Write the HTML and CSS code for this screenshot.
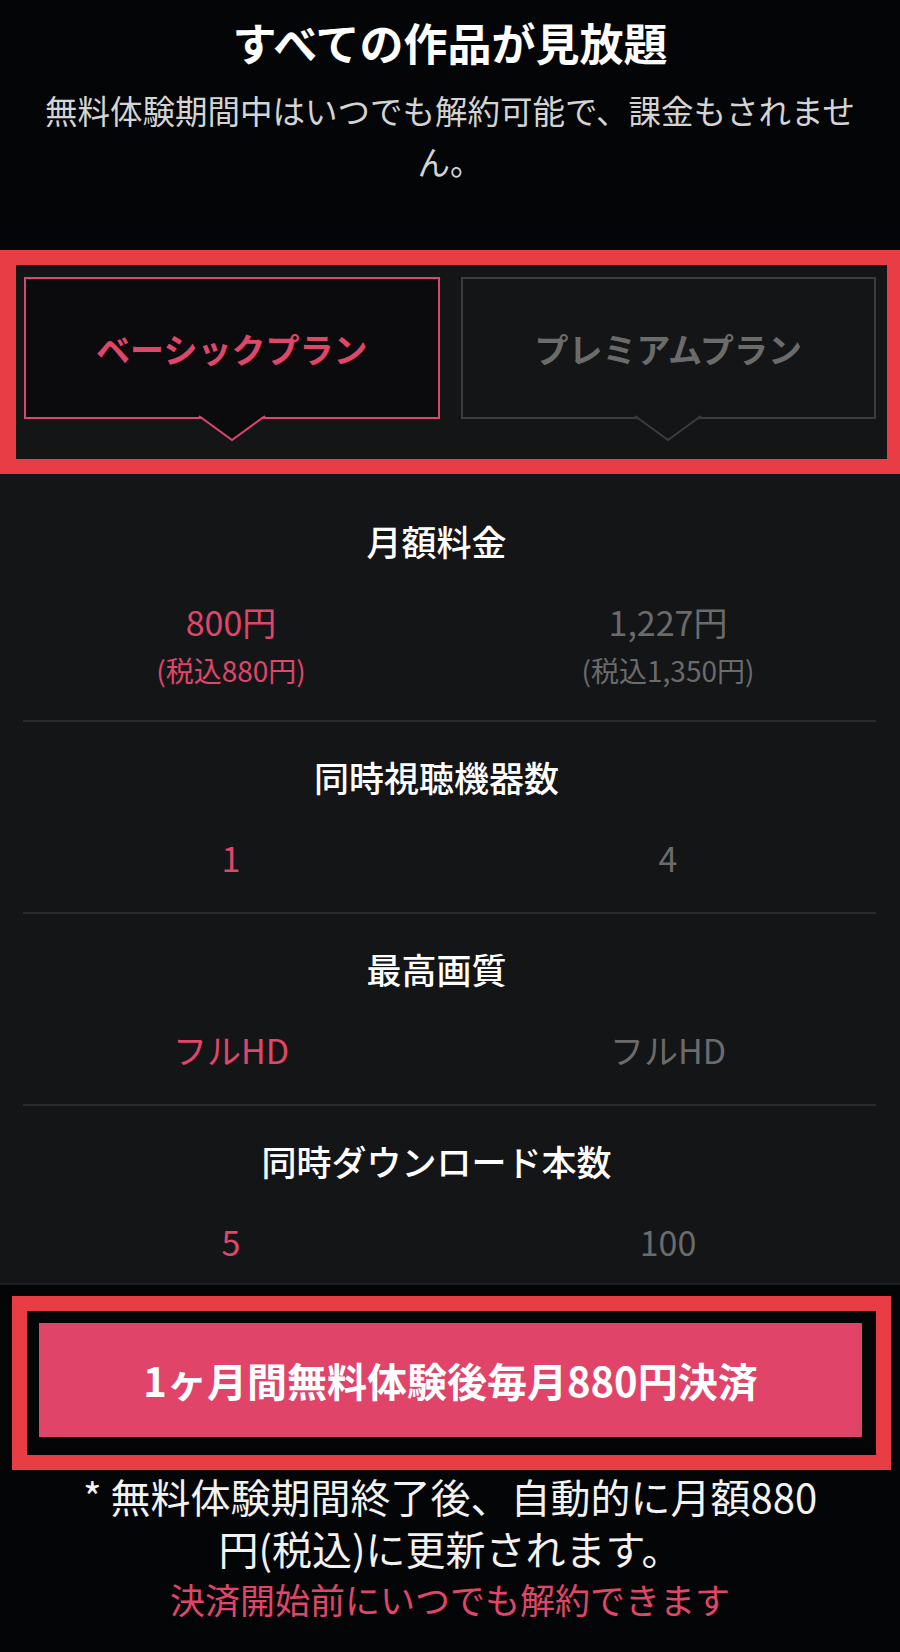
FILE: index.html
```html
<!DOCTYPE html>
<html lang="ja">
<head>
    <meta charset="UTF-8">
    <meta name="viewport" content="width=device-width, initial-scale=1.0">
    <title>プラン選択</title>
    <link rel="stylesheet" href="styles.css">
</head>
<body>
    <!-- Intro -->
    <header class="intro">
        <h1 class="intro-title">すべての作品が見放題</h1>
        <p class="intro-text">無料体験期間中はいつでも解約可能で、課金もされません。</p>
    </header>

    <!-- Plans -->
    <section class="plans">
        <div class="plan-tabs">
            <div class="plan-tab active">
                ベーシックプラン
                <svg class="tab-arrow" viewBox="0 0 66 26" width="66" height="26">
                    <polygon points="0,0 66,0 33,25"></polygon>
                    <polyline points="0,1 33,25 66,1"></polyline>
                </svg>
            </div>
            <div class="plan-tab">
                プレミアムプラン
                <svg class="tab-arrow" viewBox="0 0 66 26" width="66" height="26">
                    <polygon points="0,0 66,0 33,25"></polygon>
                    <polyline points="0,1 33,25 66,1"></polyline>
                </svg>
            </div>
        </div>

        <div class="spec-list">
            <div class="spec">
                <div class="spec-label">月額料金</div>
                <div class="spec-values">
                    <div class="spec-value basic">800円<small>(税込880円)</small></div>
                    <div class="spec-value premium">1,227円<small>(税込1,350円)</small></div>
                </div>
            </div>
            <div class="spec">
                <div class="spec-label">同時視聴機器数</div>
                <div class="spec-values">
                    <div class="spec-value basic">1</div>
                    <div class="spec-value premium">4</div>
                </div>
            </div>
            <div class="spec">
                <div class="spec-label">最高画質</div>
                <div class="spec-values">
                    <div class="spec-value basic">フルHD</div>
                    <div class="spec-value premium">フルHD</div>
                </div>
            </div>
            <div class="spec">
                <div class="spec-label">同時ダウンロード本数</div>
                <div class="spec-values">
                    <div class="spec-value basic">5</div>
                    <div class="spec-value premium">100</div>
                </div>
            </div>
        </div>
    </section>

    <!-- Signup -->
    <footer class="signup">
        <div class="cta-frame">
            <button class="cta">1ヶ月間無料体験後毎月880円決済</button>
        </div>
        <p class="note">* 無料体験期間終了後、自動的に月額880円(税込)に更新されます。</p>
        <p class="note-accent">決済開始前にいつでも解約できます</p>
    </footer>
</body>
</html>
```

FILE: styles.css
```css
/* General Styles */
body {
    font-family: 'Noto Sans CJK JP', 'Noto Sans', sans-serif;
    margin: 0;
    padding: 0;
    background: #040506;
    color: #fff;
    min-height: 100vh;
}

/* Intro */
.intro {
    text-align: center;
    padding: 14px 35px 64px;
}

.intro-title {
    font-size: 44px;
    font-weight: 700;
    line-height: 56px;
    margin: 0;
}

.intro-text {
    font-size: 32.5px;
    line-height: 51px;
    color: #d4d4d4;
    margin: 14px 0 0;
}

/* Plans */
.plans {
    background: #141517;
}

.plan-tabs {
    display: grid;
    grid-template-columns: 1fr 1fr;
    gap: 21px;
    padding: 12px 11px 40px 8px;
    border: 15px solid #e83d44;
    border-right-width: 13px;
    border-left-width: 16px;
}

.plan-tab {
    position: relative;
    height: 142px;
    box-sizing: border-box;
    border: 2px solid #3b3c3e;
    display: flex;
    align-items: center;
    justify-content: center;
    font-size: 34px;
    font-weight: 700;
    color: #6b6b6b;
    background: #141517;
}

.plan-tab.active {
    border-color: #dc466c;
    color: #e0466a;
    background: #0b0a0c;
}

.tab-arrow {
    position: absolute;
    left: 50%;
    top: 100%;
    margin-top: -2px;
    transform: translateX(-50%);
    overflow: visible;
}

.tab-arrow polygon {
    fill: #141517;
}

.tab-arrow polyline {
    fill: none;
    stroke: #3b3c3e;
    stroke-width: 2;
}

.plan-tab.active .tab-arrow polygon {
    fill: #0b0a0c;
}

.plan-tab.active .tab-arrow polyline {
    stroke: #dc466c;
}

.spec-list {
    padding: 12px 24px 0 23px;
}

.spec {
    padding: 30px 0;
    border-bottom: 2px solid #2a2b2d;
    text-align: center;
}

.spec:last-child {
    border-bottom: none;
    padding-bottom: 17px;
}

.spec-label {
    font-size: 35px;
    font-weight: 500;
    line-height: 50px;
    padding-right: 26px;
    margin-bottom: 32px;
}

.spec-values {
    display: grid;
    grid-template-columns: 1fr 1fr;
    gap: 21px;
}

.spec-value {
    font-size: 34px;
    line-height: 48px;
}

.spec-value small {
    display: block;
    font-size: 28px;
    line-height: 40px;
    margin-top: 4px;
}

.basic {
    color: #e0466a;
}

.premium {
    color: #6b6b6b;
}

/* Signup */
.signup {
    border-top: 2px solid #1e1f21;
    text-align: center;
    padding-bottom: 20px;
}

.cta-frame {
    margin: 11px 9px 0 12px;
    border: 15px solid #e83d44;
    padding: 12px 14px 18px 12px;
    background: #040506;
}

.cta {
    display: block;
    width: 100%;
    height: 114px;
    border: none;
    background: #e04569;
    color: #fff;
    font-family: inherit;
    font-size: 40px;
    font-weight: 700;
    cursor: pointer;
}

.note {
    font-size: 40px;
    line-height: 52px;
    color: #f2f2f2;
    max-width: 760px;
    margin: 0 auto;
}

.note-accent {
    font-size: 35px;
    line-height: 50px;
    color: #e0466a;
    margin: 0;
}
```
